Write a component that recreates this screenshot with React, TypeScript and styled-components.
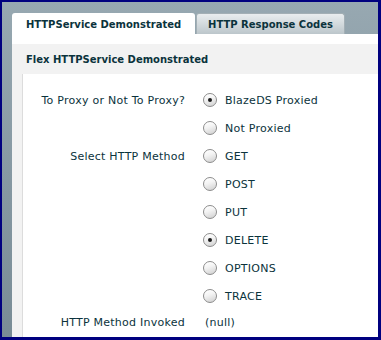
import { FC } from "react";
import styled, { createGlobalStyle } from "styled-components";

const GlobalStyle = createGlobalStyle`
  html, body {
    margin: 0;
    padding: 0;
    background: #00007f;
  }
  body {
    font-family: "DejaVu Sans", Verdana, sans-serif;
    font-size: 10px;
    color: #0b333c;
  }
`;

interface RadioRowProps {
  label?: string;
  option: string;
  selected?: boolean;
}

const methods = ["GET", "POST", "PUT", "DELETE", "OPTIONS", "TRACE"];
const selectedMethod = "DELETE";

const RadioRow: FC<RadioRowProps> = ({ label, option, selected }) => (
  <RowStyled>
    <LabelStyled>{label}</LabelStyled>
    <OptionStyled>
      <RadioStyled $selected={!!selected} />
      <span>{option}</span>
    </OptionStyled>
  </RowStyled>
);

const App: FC = () => {
  return (
    <>
      <GlobalStyle />
      <FrameStyled>
        <TabBarStyled>
          <TabStyled $active>HTTPService Demonstrated</TabStyled>
          <TabStyled $active={false}>HTTP Response Codes</TabStyled>
        </TabBarStyled>
        <PanelStyled>
          <PanelTitleStyled>Flex HTTPService Demonstrated</PanelTitleStyled>
          <PanelBodyStyled>
            <ContentStyled>
              <RadioRow label='To Proxy or Not To Proxy?' option='BlazeDS Proxied' selected />
              <RadioRow option='Not Proxied' />
              {methods.map((m, i) => (
                <RadioRow
                  key={m}
                  label={i === 0 ? "Select HTTP Method" : undefined}
                  option={m}
                  selected={m === selectedMethod}
                />
              ))}
              <ResultRowStyled>
                <LabelStyled>HTTP Method Invoked</LabelStyled>
                <ValueStyled>(null)</ValueStyled>
              </ResultRowStyled>
            </ContentStyled>
          </PanelBodyStyled>
        </PanelStyled>
      </FrameStyled>
    </>
  );
};

const FrameStyled = styled.div`
  margin: 2px 3px 0 2px;
  height: 335px;
  overflow: hidden;
  display: flex;
  flex-direction: column;
  padding: 11px 0 0 10px;
  box-sizing: border-box;
  background: linear-gradient(180deg, #97a8b1 0%, #8799a3 50%, #798c96 100%);
`;

const TabBarStyled = styled.div`
  display: flex;
  align-items: flex-end;
  gap: 1px;
  height: 21px;
`;

const TabStyled = styled.div<{ $active: boolean }>`
  display: flex;
  align-items: center;
  justify-content: center;
  box-sizing: border-box;
  height: 21px;
  width: ${(p) => (p.$active ? "183px" : "149px")};
  border-radius: 3px 3px 0 0;
  font-weight: bold;
  font-size: 10px;
  padding-top: ${(p) => (p.$active ? "2px" : "0")};
  background: ${(p) => (p.$active ? "#ffffff" : "linear-gradient(180deg, #e9edef 0%, #d3dadd 50%, #bcc6cb 100%)")};
  border: ${(p) => (p.$active ? "none" : "1px solid #a3afb5")};
  border-bottom: none;
  color: #0b333c;
`;

const PanelStyled = styled.div`
  flex: 1;
  display: flex;
  flex-direction: column;
  background: #f2f2f2;
  border-top: 10px solid #ffffff;
`;

const PanelTitleStyled = styled.div`
  height: 30px;
  display: flex;
  align-items: center;
  padding-left: 14px;
  font-weight: bold;
  font-size: 10px;
`;

const PanelBodyStyled = styled.div`
  flex: 1;
  display: flex;
  padding-left: 10px;
`;

const ContentStyled = styled.div`
  flex: 1;
  background: #ffffff;
  border-left: 1px solid #dcdcdc;
  padding-top: 12px;
  font-size: 11px;
  letter-spacing: 0.25px;
`;

const RowStyled = styled.div`
  display: grid;
  grid-template-columns: 162px 1fr;
  column-gap: 18px;
  align-items: center;
  height: 28px;
`;

const ResultRowStyled = styled(RowStyled)`
  height: 24px;
`;

const LabelStyled = styled.div`
  text-align: right;
  white-space: nowrap;
`;

const OptionStyled = styled.div`
  display: flex;
  align-items: center;
  gap: 8px;
`;

const RadioStyled = styled.span<{ $selected: boolean }>`
  position: relative;
  width: 14px;
  height: 14px;
  box-sizing: border-box;
  border-radius: 50%;
  border: 1px solid #8c8c8c;
  background: linear-gradient(160deg, #ffffff 0%, #f4f4f4 40%, #cfcfcf 100%);
  box-shadow: inset 0 1px 0 #ffffff;

  &::after {
    content: "";
    display: ${(p) => (p.$selected ? "block" : "none")};
    position: absolute;
    left: 4px;
    top: 4px;
    width: 4px;
    height: 4px;
    border-radius: 50%;
    background: #1c1c1c;
  }
`;

const ValueStyled = styled.div`
  padding-left: 2px;
`;

export default App;
